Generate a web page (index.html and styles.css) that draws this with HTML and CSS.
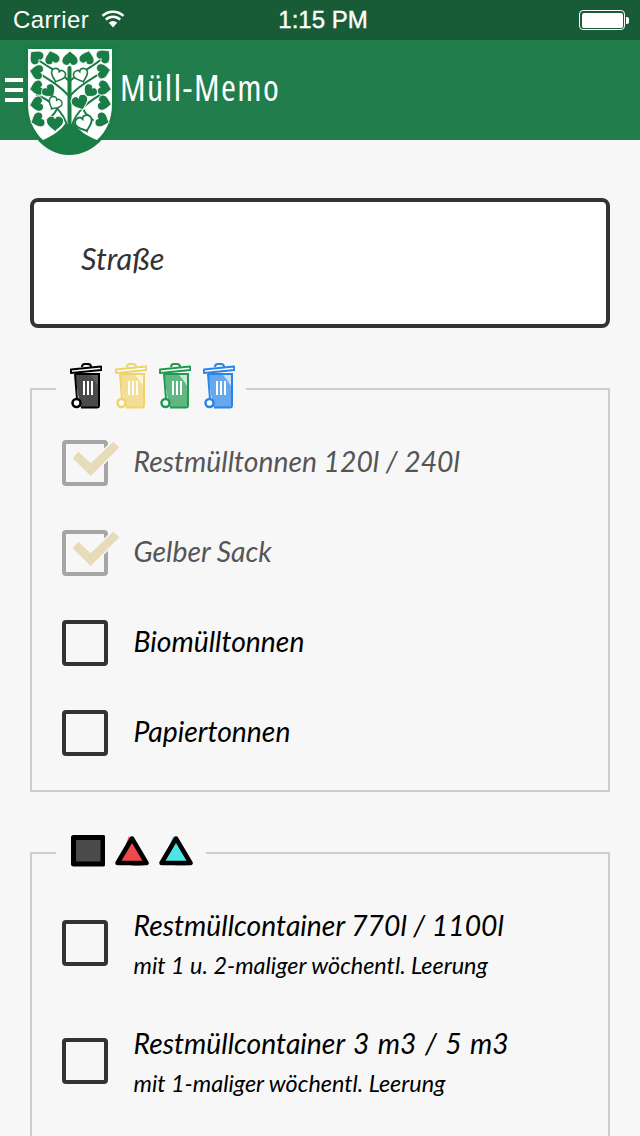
FILE: index.html
```html
<!DOCTYPE html>
<html lang="de">
<head>
<meta charset="utf-8">
<title>Müll-Memo</title>
<link rel="stylesheet" href="styles.css">
</head>
<body>
<svg class="defs" width="0" height="0" aria-hidden="true">
  <defs>
    <path id="leaf" d="M0 9 C-1 7 -9 3.500 -9 -2 C-9 -6 -5 -7.500 -2.500 -7 C-1 -6.800 0 -4.500 0 -4.500 C0 -4.500 1 -6.800 2.500 -7 C5 -7.500 9 -6 9 -2 C9 3.500 1 7 0 9Z"/>
    <symbol id="bin" viewBox="0 0 32 46">
      <path d="M5 11 H28 L28 42 Q28 44 25 44 H10 L5 11Z" fill="currentColor" fill-opacity=".7"/>
      <path class="bin-patch" d="M20 12 H28 V23 Q24 16 20 12Z" fill="#fff"/>
      <path d="M5 11 H29 V42 Q29 44.500 27 44.500 H11 M5 11 L7 36" fill="none" stroke="currentColor" stroke-width="2"/>
      <path d="M1 6.500 L31 3.500 L31.500 7 L1 10Z" fill="#fff" stroke="currentColor" stroke-width="2" stroke-linejoin="round"/>
      <path d="M12 4 Q12 1 15 1 H18 Q21 1 21 4" fill="none" stroke="currentColor" stroke-width="2"/>
      <path d="M14 18 V32 M18 18 V32 M22 18 V32" stroke="#fff" stroke-width="2"/>
      <circle cx="6.500" cy="40" r="4" fill="#fff" stroke="currentColor" stroke-width="2.500"/>
    </symbol>
    <symbol id="check" viewBox="0 0 60 40">
      <path d="M10.700 18.300 L16.300 11.700 L28.700 23.300 L51.300 1.700 L57.300 7.300 L28.700 36Z" fill="none" stroke="#f7f7f7" stroke-width="3"/>
      <path d="M10.700 18.300 L16.300 11.700 L28.700 23.300 L51.300 1.700 L57.300 7.300 L28.700 36Z" fill="#e8dbb8"/>
    </symbol>
  </defs>
</svg>

<div class="statusbar">
  <div class="status-left">
    <span class="carrier">Carrier</span>
    <svg class="wifi" viewBox="0 0 24 18" width="24" height="18">
      <path d="M12 17.500 L7.800 12.800 A6 6 0 0 1 16.200 12.800Z" fill="#fff"/>
      <path d="M4.800 9.600 A10.500 10.500 0 0 1 19.200 9.600 M1.500 5.800 A15.500 15.500 0 0 1 22.500 5.800" fill="none" stroke="#fff" stroke-width="2.400"/>
    </svg>
  </div>
  <div class="status-time">1:15 PM</div>
  <div class="battery"><div class="battery-body"><div class="battery-fill"></div></div><div class="battery-nub"></div></div>
</div>

<header class="appbar">
  <div class="burger"><i></i><i></i><i></i></div>
  <svg class="logo" viewBox="24 45 92 110" width="92" height="110">
    <path d="M24 45 H116 V104 C116 130 95 155 69 155 C44 155 24 130 24 104Z" fill="#1a7d45"/>
    <path d="M28 49 H112 V104 C112 120 106 132 97 140 C87 136 79 131 75 124 H65 C60 131 52 136 43 140 C33 131 28 118 28 104Z" fill="#fff"/>
    <g fill="none" stroke="#1a7d45" stroke-linecap="round">
      <path d="M69.500 128 V68" stroke-width="4"/>
      <path d="M67 126 C64 112 50 100 37 95 M72 126 C75 112 90 100 104 93" stroke-width="2"/>
      <path d="M69 96 C60 86 50 80 37 72 M70 96 C78 86 90 80 104 71" stroke-width="2"/>
      <path d="M68 80 C60 72 48 68 36 58 M71 80 C80 72 92 68 104 57" stroke-width="2"/>
      <path d="M47 120 C52 117 58 110 60 102 M93 120 C88 117 82 110 80 102" stroke-width="2"/>
    </g>
    <g fill="#1a7d45" stroke="#fff" stroke-width="1">
      <use href="#leaf" transform="translate(36 57) rotate(135) scale(.85)"/>
      <use href="#leaf" transform="translate(52 58) rotate(165) scale(.85)"/>
      <use href="#leaf" transform="translate(70 59) rotate(180) scale(.9)"/>
      <use href="#leaf" transform="translate(87 58) rotate(195) scale(.85)"/>
      <use href="#leaf" transform="translate(104 56) rotate(225) scale(.85)"/>
      <use href="#leaf" transform="translate(37 72) rotate(100) scale(.85)"/>
      <use href="#leaf" transform="translate(103 71) rotate(260) scale(.85)"/>
      <use href="#leaf" transform="translate(37 88) rotate(80) scale(.85)"/>
      <use href="#leaf" transform="translate(49 91) rotate(320) scale(.8)"/>
      <use href="#leaf" transform="translate(90 91) rotate(40) scale(.8)"/>
      <use href="#leaf" transform="translate(104 88) rotate(280) scale(.85)"/>
      <use href="#leaf" transform="translate(37 104) rotate(80) scale(.85)"/>
      <use href="#leaf" transform="translate(80 102) rotate(340) scale(.95)"/>
      <use href="#leaf" transform="translate(104 103) rotate(280) scale(.85)"/>
      <use href="#leaf" transform="translate(38 120) rotate(70) scale(.85)"/>
      <use href="#leaf" transform="translate(102 120) rotate(290) scale(.85)"/>
      <use href="#leaf" transform="translate(55 123) scale(.95)"/>
    </g>
    <g fill="#fff" stroke="#1a7d45" stroke-width="2">
      <use href="#leaf" transform="translate(58 75) rotate(20) scale(.8)"/>
      <use href="#leaf" transform="translate(81 75) rotate(340) scale(.8)"/>
      <use href="#leaf" transform="translate(55 103) rotate(30) scale(.75)"/>
      <use href="#leaf" transform="translate(84 123) rotate(-20) scale(.95)"/>
    </g>
  </svg>
  <h1 class="title">Müll-Memo</h1>
</header>

<main class="content">
  <div class="street">Straße</div>

  <fieldset class="group">
    <legend class="legend legend-bins">
      <svg class="bin bin-black"><use href="#bin"/></svg>
      <svg class="bin bin-yellow"><use href="#bin"/></svg>
      <svg class="bin bin-green"><use href="#bin"/></svg>
      <svg class="bin bin-blue"><use href="#bin"/></svg>
    </legend>
    <div class="row checked">
      <div class="box"><svg class="tick"><use href="#check"/></svg></div>
      <div class="label">Restmülltonnen 120l / 240l</div>
    </div>
    <div class="row checked">
      <div class="box"><svg class="tick"><use href="#check"/></svg></div>
      <div class="label">Gelber Sack</div>
    </div>
    <div class="row">
      <div class="box"></div>
      <div class="label">Biomülltonnen</div>
    </div>
    <div class="row">
      <div class="box"></div>
      <div class="label">Papiertonnen</div>
    </div>
  </fieldset>

  <fieldset class="group group-open">
    <legend class="legend legend-shapes">
      <svg class="shape" viewBox="0 0 34 32" width="34" height="32">
        <rect x="2.500" y="2.500" width="29.500" height="26.500" fill="#4a4a4a" stroke="#000" stroke-width="5" stroke-linejoin="round"/>
      </svg>
      <svg class="shape" viewBox="0 0 34 32" width="34" height="32">
        <path d="M14 1 L30 30 Q22 32 14 30 L4 28Z" fill="#ec4a4c"/>
        <path d="M17 3.500 L31.500 28 H2.500Z" fill="#ec4a4c" stroke="#000" stroke-width="4.500" stroke-linejoin="round"/>
      </svg>
      <svg class="shape" viewBox="0 0 34 32" width="34" height="32">
        <path d="M14 1 L30 30 Q22 32 14 30 L4 28Z" fill="#4de5e5"/>
        <path d="M17 3.500 L31.500 28 H2.500Z" fill="#4de5e5" stroke="#000" stroke-width="4.500" stroke-linejoin="round"/>
      </svg>
    </legend>
    <div class="row row-tall">
      <div class="box"></div>
      <div class="label-stack">
        <div class="label">Restmüllcontainer 770l / 1100l</div>
        <div class="sublabel">mit 1 u. 2-maliger wöchentl. Leerung</div>
      </div>
    </div>
    <div class="row row-tall">
      <div class="box"></div>
      <div class="label-stack">
        <div class="label label-spaced">Restmüllcontainer 3 m3 / 5 m3</div>
        <div class="sublabel">mit 1-maliger wöchentl. Leerung</div>
      </div>
    </div>
  </fieldset>
</main>
</body>
</html>
```
FILE: styles.css
```css
* { box-sizing: border-box; }
html, body { margin: 0; padding: 0; height: 1136px; overflow: hidden; }
body { background: #f7f7f7; font-family: "Lato", "Noto Sans", sans-serif; color: #000; }
.defs { display: block; height: 0; }

.statusbar {
  height: 40px; background: #185c37; color: #fff; position: relative;
  display: flex; align-items: center; justify-content: space-between;
  padding: 0 11px 0 13px; font-family: "Liberation Sans", sans-serif; font-size: 24px;
}
.carrier { letter-spacing: .4px; }
.status-left { display: flex; align-items: center; gap: 12px; }
.wifi { display: block; margin-top: -2px; }
.status-time { position: absolute; left: 0; right: 0; text-align: center; font-weight: 500; padding-left: 6px; -webkit-text-stroke: .4px #fff; }
.battery { display: flex; align-items: center; }
.battery-body { width: 46px; height: 20px; border: 1.500px solid #fff; border-radius: 4px; padding: 1.500px; }
.battery-fill { width: 100%; height: 100%; background: #fff; border-radius: 2px; }
.battery-nub { width: 3px; height: 7px; background: #fff; border-radius: 0 2px 2px 0; margin-left: 1px; }

.appbar {
  height: 100px; background: #217d4c; display: flex; align-items: flex-start;
  padding-left: 5px; position: relative; z-index: 2;
}
.burger { width: 18px; display: flex; flex-direction: column; gap: 6px; margin-top: 38px; }
.burger i { display: block; height: 4px; background: #fff; }
.logo { display: block; flex: none; margin: 5px 0 0 1px; }
.title {
  margin: 26px 0 0 4px; font-family: "Open Sans", sans-serif; font-size: 36px; line-height: 44px;
  font-weight: 400; font-stretch: 75%; letter-spacing: 1.500px; color: #fff;
}

.content { padding: 58px 30px 0; }
.street {
  height: 130px; border: 4px solid #333; border-radius: 8px; background: #fff;
  display: flex; align-items: center; padding: 0 0 10px 47px;
  font-size: 30.6px; font-style: italic; color: #333;
}

.group { margin: 35px 0 0; padding: 0 0 34px; border: 2px solid #ccc; min-width: 0; }
.group-open { margin-top: 43px; padding-bottom: 300px; }
.legend { margin-left: 24px; padding: 0 11px 0 14px; display: flex; }
.legend-bins { height: 52px; gap: 12px; }
.legend-shapes { height: 36px; gap: 10px; padding-left: 15px; padding-right: 13px; }
.bin { width: 32px; height: 46px; display: block; --patch: .65; }
.bin-patch { fill-opacity: var(--patch); }
.bin-black { color: #000; margin-right: 1px; --patch: .12; }
.bin-yellow { color: #efd36b; }
.bin-green { color: #1f9b50; }
.bin-blue { color: #2a85e8; }
.shape { display: block; }

.row { display: flex; align-items: center; gap: 25.500px; height: 46px; margin: 44px 0 0 30px; }
.legend + .row { margin-top: 25px; }
.group-open .legend + .row { margin-top: 35px; }
.row-tall { height: 74px; }
.box { width: 46px; height: 46px; flex: none; border: 4px solid #333; border-radius: 4px; position: relative; }
.tick { position: absolute; left: -4px; top: -4px; width: 60px; height: 40px; }
.label { font-size: 28.3px; font-style: italic; line-height: 36px; white-space: nowrap; margin-top: -4px; }
.label-stack .label { margin-top: 0; }
.label-stack .label-spaced { word-spacing: 1.800px; }
.sublabel { font-size: 23.4px; font-style: italic; line-height: 30px; margin-top: 7px; white-space: nowrap; }
.checked .box { border-color: #a6a6a6; }
.checked .label { color: #555; }
```
